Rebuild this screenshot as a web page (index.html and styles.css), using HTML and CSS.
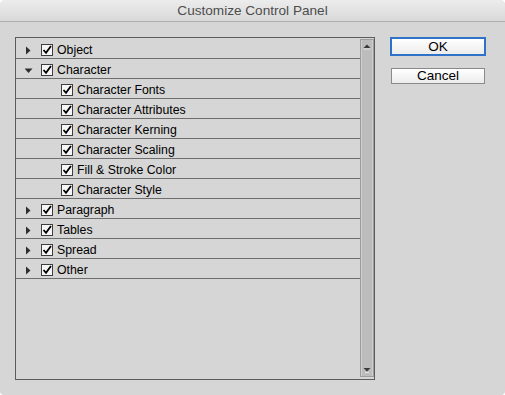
FILE: index.html
```html
<!DOCTYPE html>
<html>
<head>
<meta charset="utf-8">
<link rel="stylesheet" href="styles.css">
</head>
<body>
<div class="window">
  <div class="titlebar">Customize Control Panel</div>
  <div class="content">
    <div class="list">
      <div class="rows">
        <div class="row top"><svg class="twisty" viewBox="0 0 8 9"><polygon points="1,0.5 5.5,4.5 1,8.5" /></svg><svg class="cb" viewBox="0 0 12 12"><rect x="0.5" y="0.5" width="11" height="11"/><path d="M2.5 6 L5 8.8 L10 2"/></svg><span>Object</span></div>
        <div class="row top"><svg class="twisty" viewBox="0 0 8 9"><polygon points="-0.5,2.5 7.5,2.5 3.5,7" /></svg><svg class="cb" viewBox="0 0 12 12"><rect x="0.5" y="0.5" width="11" height="11"/><path d="M2.5 6 L5 8.8 L10 2"/></svg><span>Character</span></div>
        <div class="row child"><svg class="cb" viewBox="0 0 12 12"><rect x="0.5" y="0.5" width="11" height="11"/><path d="M2.5 6 L5 8.8 L10 2"/></svg><span>Character Fonts</span></div>
        <div class="row child"><svg class="cb" viewBox="0 0 12 12"><rect x="0.5" y="0.5" width="11" height="11"/><path d="M2.5 6 L5 8.8 L10 2"/></svg><span>Character Attributes</span></div>
        <div class="row child"><svg class="cb" viewBox="0 0 12 12"><rect x="0.5" y="0.5" width="11" height="11"/><path d="M2.5 6 L5 8.8 L10 2"/></svg><span>Character Kerning</span></div>
        <div class="row child"><svg class="cb" viewBox="0 0 12 12"><rect x="0.5" y="0.5" width="11" height="11"/><path d="M2.5 6 L5 8.8 L10 2"/></svg><span>Character Scaling</span></div>
        <div class="row child"><svg class="cb" viewBox="0 0 12 12"><rect x="0.5" y="0.5" width="11" height="11"/><path d="M2.5 6 L5 8.8 L10 2"/></svg><span>Fill &amp; Stroke Color</span></div>
        <div class="row child"><svg class="cb" viewBox="0 0 12 12"><rect x="0.5" y="0.5" width="11" height="11"/><path d="M2.5 6 L5 8.8 L10 2"/></svg><span>Character Style</span></div>
        <div class="row top"><svg class="twisty" viewBox="0 0 8 9"><polygon points="1,0.5 5.5,4.5 1,8.5" /></svg><svg class="cb" viewBox="0 0 12 12"><rect x="0.5" y="0.5" width="11" height="11"/><path d="M2.5 6 L5 8.8 L10 2"/></svg><span>Paragraph</span></div>
        <div class="row top"><svg class="twisty" viewBox="0 0 8 9"><polygon points="1,0.5 5.5,4.5 1,8.5" /></svg><svg class="cb" viewBox="0 0 12 12"><rect x="0.5" y="0.5" width="11" height="11"/><path d="M2.5 6 L5 8.8 L10 2"/></svg><span>Tables</span></div>
        <div class="row top"><svg class="twisty" viewBox="0 0 8 9"><polygon points="1,0.5 5.5,4.5 1,8.5" /></svg><svg class="cb" viewBox="0 0 12 12"><rect x="0.5" y="0.5" width="11" height="11"/><path d="M2.5 6 L5 8.8 L10 2"/></svg><span>Spread</span></div>
        <div class="row top"><svg class="twisty" viewBox="0 0 8 9"><polygon points="1,0.5 5.5,4.5 1,8.5" /></svg><svg class="cb" viewBox="0 0 12 12"><rect x="0.5" y="0.5" width="11" height="11"/><path d="M2.5 6 L5 8.8 L10 2"/></svg><span>Other</span></div>
      </div>
      <div class="scrollbar">
        <svg class="arrow" viewBox="0 0 8 6"><polygon points="4,0.5 7.5,4 0.5,4"/><line x1="0.5" y1="5" x2="7.5" y2="5"/></svg>
        <svg class="arrow" viewBox="0 0 8 6"><polygon points="0.5,1 7.5,1 4,4.5"/><line x1="2" y1="5.5" x2="6" y2="5.5"/></svg>
      </div>
    </div>
    <div class="buttons">
      <div class="btn ok">OK</div>
      <div class="btn cancel">Cancel</div>
    </div>
  </div>
</div>
</body>
</html>
```
FILE: styles.css
```css
html, body {
  margin: 0;
  padding: 0;
  background: #ffffff;
}
body {
  width: 505px;
  height: 395px;
  font-family: "Liberation Sans", Arial, sans-serif;
}
.window {
  width: 505px;
  height: 395px;
  background: #d6d6d6;
  border-radius: 5px 5px 4px 4px;
  overflow: hidden;
  display: flex;
  flex-direction: column;
}
.titlebar {
  height: 21px;
  line-height: 22px;
  border-bottom: 1px solid #aeaeae;
  background: linear-gradient(#ececec, #d9d9d9);
  text-align: center;
  font-size: 13.6px;
  color: #4d4d4d;
  flex: none;
}
.content {
  display: flex;
  padding: 15px 0 0 15px;
}
.list {
  width: 358px;
  height: 341px;
  border: 1px solid #5c5c5c;
  display: flex;
}
.rows {
  width: 344px;
  padding-top: 1px;
  display: flex;
  flex-direction: column;
}
.row {
  height: 16px;
  padding-top: 3px;
  border-bottom: 1px solid #6e6e6e;
  display: flex;
  align-items: center;
  font-size: 12.3px;
  color: #000;
  white-space: nowrap;
}
.row.top {
  padding-left: 9px;
}
.row.child {
  padding-left: 45px;
}
.twisty {
  width: 8px;
  height: 9px;
  margin-right: 8px;
  fill: #2e2e2e;
  flex: none;
}
.cb {
  width: 12px;
  height: 12px;
  margin-right: 4px;
  flex: none;
}
.cb rect {
  fill: #f6f6f6;
  stroke: #3e3e3e;
  stroke-width: 1;
}
.cb path {
  fill: none;
  stroke: #000;
  stroke-width: 1.8;
}
.scrollbar {
  width: 12px;
  margin: 1px 0 2px 0;
  border: 1px solid #9c9c9c;
  background: #bcbcbc;
  box-shadow: inset 1px 0 0 #cfcfcf, inset -1px 0 0 #cfcfcf;
  display: flex;
  flex-direction: column;
  justify-content: space-between;
  align-items: center;
  padding: 4px 0 3px 0;
}
.arrow {
  width: 8px;
  height: 6px;
}
.arrow polygon {
  fill: #3a3a3a;
}
.arrow line {
  stroke: #e4e4e4;
  stroke-width: 1;
}
.buttons {
  margin-left: 15px;
  display: flex;
  flex-direction: column;
}
.btn {
  font-size: 13.5px;
  color: #000;
  text-align: center;
  background: linear-gradient(#ffffff, #ececec);
  box-sizing: border-box;
}
.ok {
  width: 96px;
  height: 19px;
  line-height: 15px;
  border: 2px solid #2f73c8;
}
.cancel {
  width: 94px;
  height: 16px;
  line-height: 14px;
  margin: 12px 0 0 1px;
  border: 1px solid #8a8a8a;
}
```
